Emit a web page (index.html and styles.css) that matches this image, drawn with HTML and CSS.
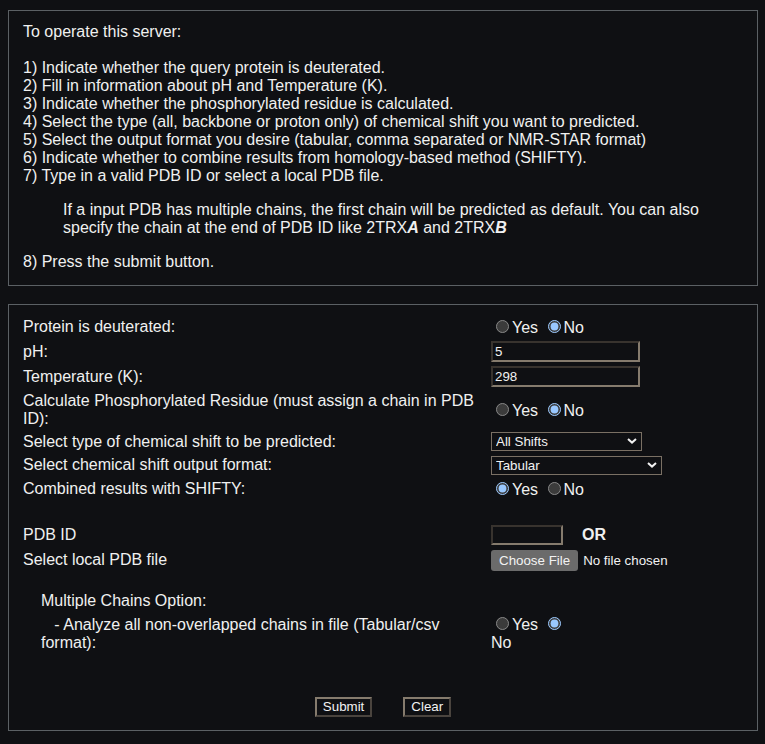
FILE: index.html
```html
<!DOCTYPE html>
<html lang="en">
<head>
<meta charset="utf-8">
<title>Chemical shift prediction server</title>
<link rel="stylesheet" href="styles.css">
</head>
<body>
<div class="panel intro">
  To operate this server:<br><br>
  1) Indicate whether the query protein is deuterated.<br>
  2) Fill in information about pH and Temperature (K).<br>
  3) Indicate whether the phosphorylated residue is calculated.<br>
  4) Select the type (all, backbone or proton only) of chemical shift you want to predicted.<br>
  5) Select the output format you desire (tabular, comma separated or NMR-STAR format)<br>
  6) Indicate whether to combine results from homology-based method (SHIFTY).<br>
  7) Type in a valid PDB ID or select a local PDB file.
  <blockquote>If a input PDB has multiple chains, the first chain will be predicted as default. You can also specify the chain at the end of PDB ID like 2TRX<b><i>A</i></b> and 2TRX<b><i>B</i></b></blockquote>
  8) Press the submit button.
</div>

<form class="panel form">
  <div class="fields">
    <div class="label">Protein is deuterated:</div>
    <div class="ctrl"><label><input type="radio" name="deut" value="1">Yes</label> <label><input type="radio" name="deut" value="0" checked>No</label></div>

    <div class="label">pH:</div>
    <div class="ctrl"><input class="text wide" type="text" name="ph" value="5"></div>

    <div class="label">Temperature (K):</div>
    <div class="ctrl"><input class="text wide" type="text" name="temp" value="298"></div>

    <div class="label calc">Calculate Phosphorylated Residue (must assign a chain in PDB ID):</div>
    <div class="ctrl"><label><input type="radio" name="phos" value="1">Yes</label> <label><input type="radio" name="phos" value="0" checked>No</label></div>

    <div class="label">Select type of chemical shift to be predicted:</div>
    <div class="ctrl">
      <span class="select-wrap">
        <select class="sel sel-type" name="type">
          <option>All Shifts</option>
          <option>Backbone Only</option>
          <option>Proton Only</option>
        </select>
        <svg class="chev" width="10" height="6" viewBox="0 0 10 6" aria-hidden="true"><path d="M1 1 L5 4.6 L9 1" fill="none" stroke="#f2f2f2" stroke-width="2"/></svg>
      </span>
    </div>

    <div class="label">Select chemical shift output format:</div>
    <div class="ctrl">
      <span class="select-wrap">
        <select class="sel sel-format" name="format">
          <option>Tabular</option>
          <option>CSV</option>
          <option>NMR-STAR</option>
        </select>
        <svg class="chev" width="10" height="6" viewBox="0 0 10 6" aria-hidden="true"><path d="M1 1 L5 4.6 L9 1" fill="none" stroke="#f2f2f2" stroke-width="2"/></svg>
      </span>
    </div>

    <div class="label">Combined results with SHIFTY:</div>
    <div class="ctrl"><label><input type="radio" name="shifty" value="1" checked>Yes</label> <label><input type="radio" name="shifty" value="0">No</label></div>
  </div>

  <div class="fields pdb">
    <div class="label">PDB ID</div>
    <div class="ctrl"><input class="text short" type="text" name="pdbid"><b class="or">OR</b></div>

    <div class="label">Select local PDB file</div>
    <div class="ctrl"><input class="file" type="file" name="pdbfile"></div>
  </div>

  <div class="chains">
    <div class="chains-title">Multiple Chains Option:</div>
    <div class="chains-row">
      <div class="label">&nbsp;&nbsp;&nbsp;- Analyze all non-overlapped chains in file (Tabular/csv format):</div>
      <div class="ctrl narrow"><label><input type="radio" name="multi" value="1">Yes</label> <label><input type="radio" name="multi" value="0" checked>No</label></div>
    </div>
  </div>

  <div class="actions">
    <button class="btn" type="submit">Submit</button>
    <button class="btn" type="reset">Clear</button>
  </div>
</form>
</body>
</html>
```

FILE: styles.css
```css
:root {
  color-scheme: dark;
}

body {
  margin: 0;
  padding: 10px 8px;
  background: #0f1013;
  color: #f0f0f0;
  font-family: "Liberation Sans", Arial, sans-serif;
  font-size: 16px;
}

.panel {
  width: 750px;
  box-sizing: border-box;
  border: 1px solid #5b6064;
}

.intro {
  padding: 12px 14px 14px;
}

.intro blockquote {
  margin: 16px 40px;
}

.form {
  margin: 18px 0 0;
  padding: 12px 14px 13px;
}

.fields {
  display: grid;
  grid-template-columns: 468px auto;
  row-gap: 4px;
  align-items: center;
  justify-items: start;
}

.fields .calc {
  padding-top: 1px;
}

.fields.pdb {
  margin-top: 26px;
  row-gap: 5px;
}

.text {
  box-sizing: border-box;
  font-family: "Liberation Sans", Arial, sans-serif;
  font-size: 13.33px;
  color: #f2f2f2;
  background: #0f1013;
  border: 2px solid;
  border-color: #38332e #857b6d #857b6d #38332e;
  padding: 1px 2px;
  margin: 0;
  outline: none;
}

.text.wide {
  width: 149px;
  height: 21px;
}

.text.short {
  width: 72px;
  height: 20px;
  vertical-align: middle;
}

.or {
  margin-left: 19px;
  vertical-align: middle;
}

.select-wrap {
  position: relative;
  display: inline-block;
  vertical-align: middle;
}

.sel {
  appearance: none;
  -webkit-appearance: none;
  box-sizing: border-box;
  display: block;
  height: 19px;
  margin: 0;
  padding: 0 18px 0 4px;
  font-family: "Liberation Sans", Arial, sans-serif;
  font-size: 13.33px;
  color: #f2f2f2;
  background: #0f1013;
  border: 1px solid #7a7064;
  border-radius: 0;
}

.sel-type {
  width: 151px;
}

.sel-format {
  width: 171px;
}

.chev {
  position: absolute;
  right: 5px;
  top: 6px;
  pointer-events: none;
}

.file {
  font-family: "Liberation Sans", Arial, sans-serif;
  font-size: 13.33px;
  color: #f2f2f2;
  margin: 0;
}

.file::file-selector-button {
  font-family: "Liberation Sans", Arial, sans-serif;
  font-size: 13.33px;
  color: #f2f2f2;
  background: #6b6b6b;
  border: none;
  border-radius: 3px;
  height: 21px;
  padding: 0 8px;
  margin: 0 5px 0 0;
}

.chains {
  margin-top: 21px;
  padding-left: 18px;
}

.chains-row {
  display: grid;
  grid-template-columns: 450px 80px;
  margin-top: 6px;
  align-items: start;
}

.narrow input[type="radio"] {
  margin-top: 0;
}

.actions {
  display: flex;
  justify-content: center;
  gap: 31px;
  margin-top: 45px;
}

.btn {
  box-sizing: border-box;
  height: 20px;
  margin: 0;
  padding: 0 6px;
  font-family: "Liberation Sans", Arial, sans-serif;
  font-size: 13.33px;
  color: #f2f2f2;
  background: #0f1013;
  border: 2px solid;
  border-color: #857b6d #4a443e #4a443e #857b6d;
  border-radius: 0;
}
```
